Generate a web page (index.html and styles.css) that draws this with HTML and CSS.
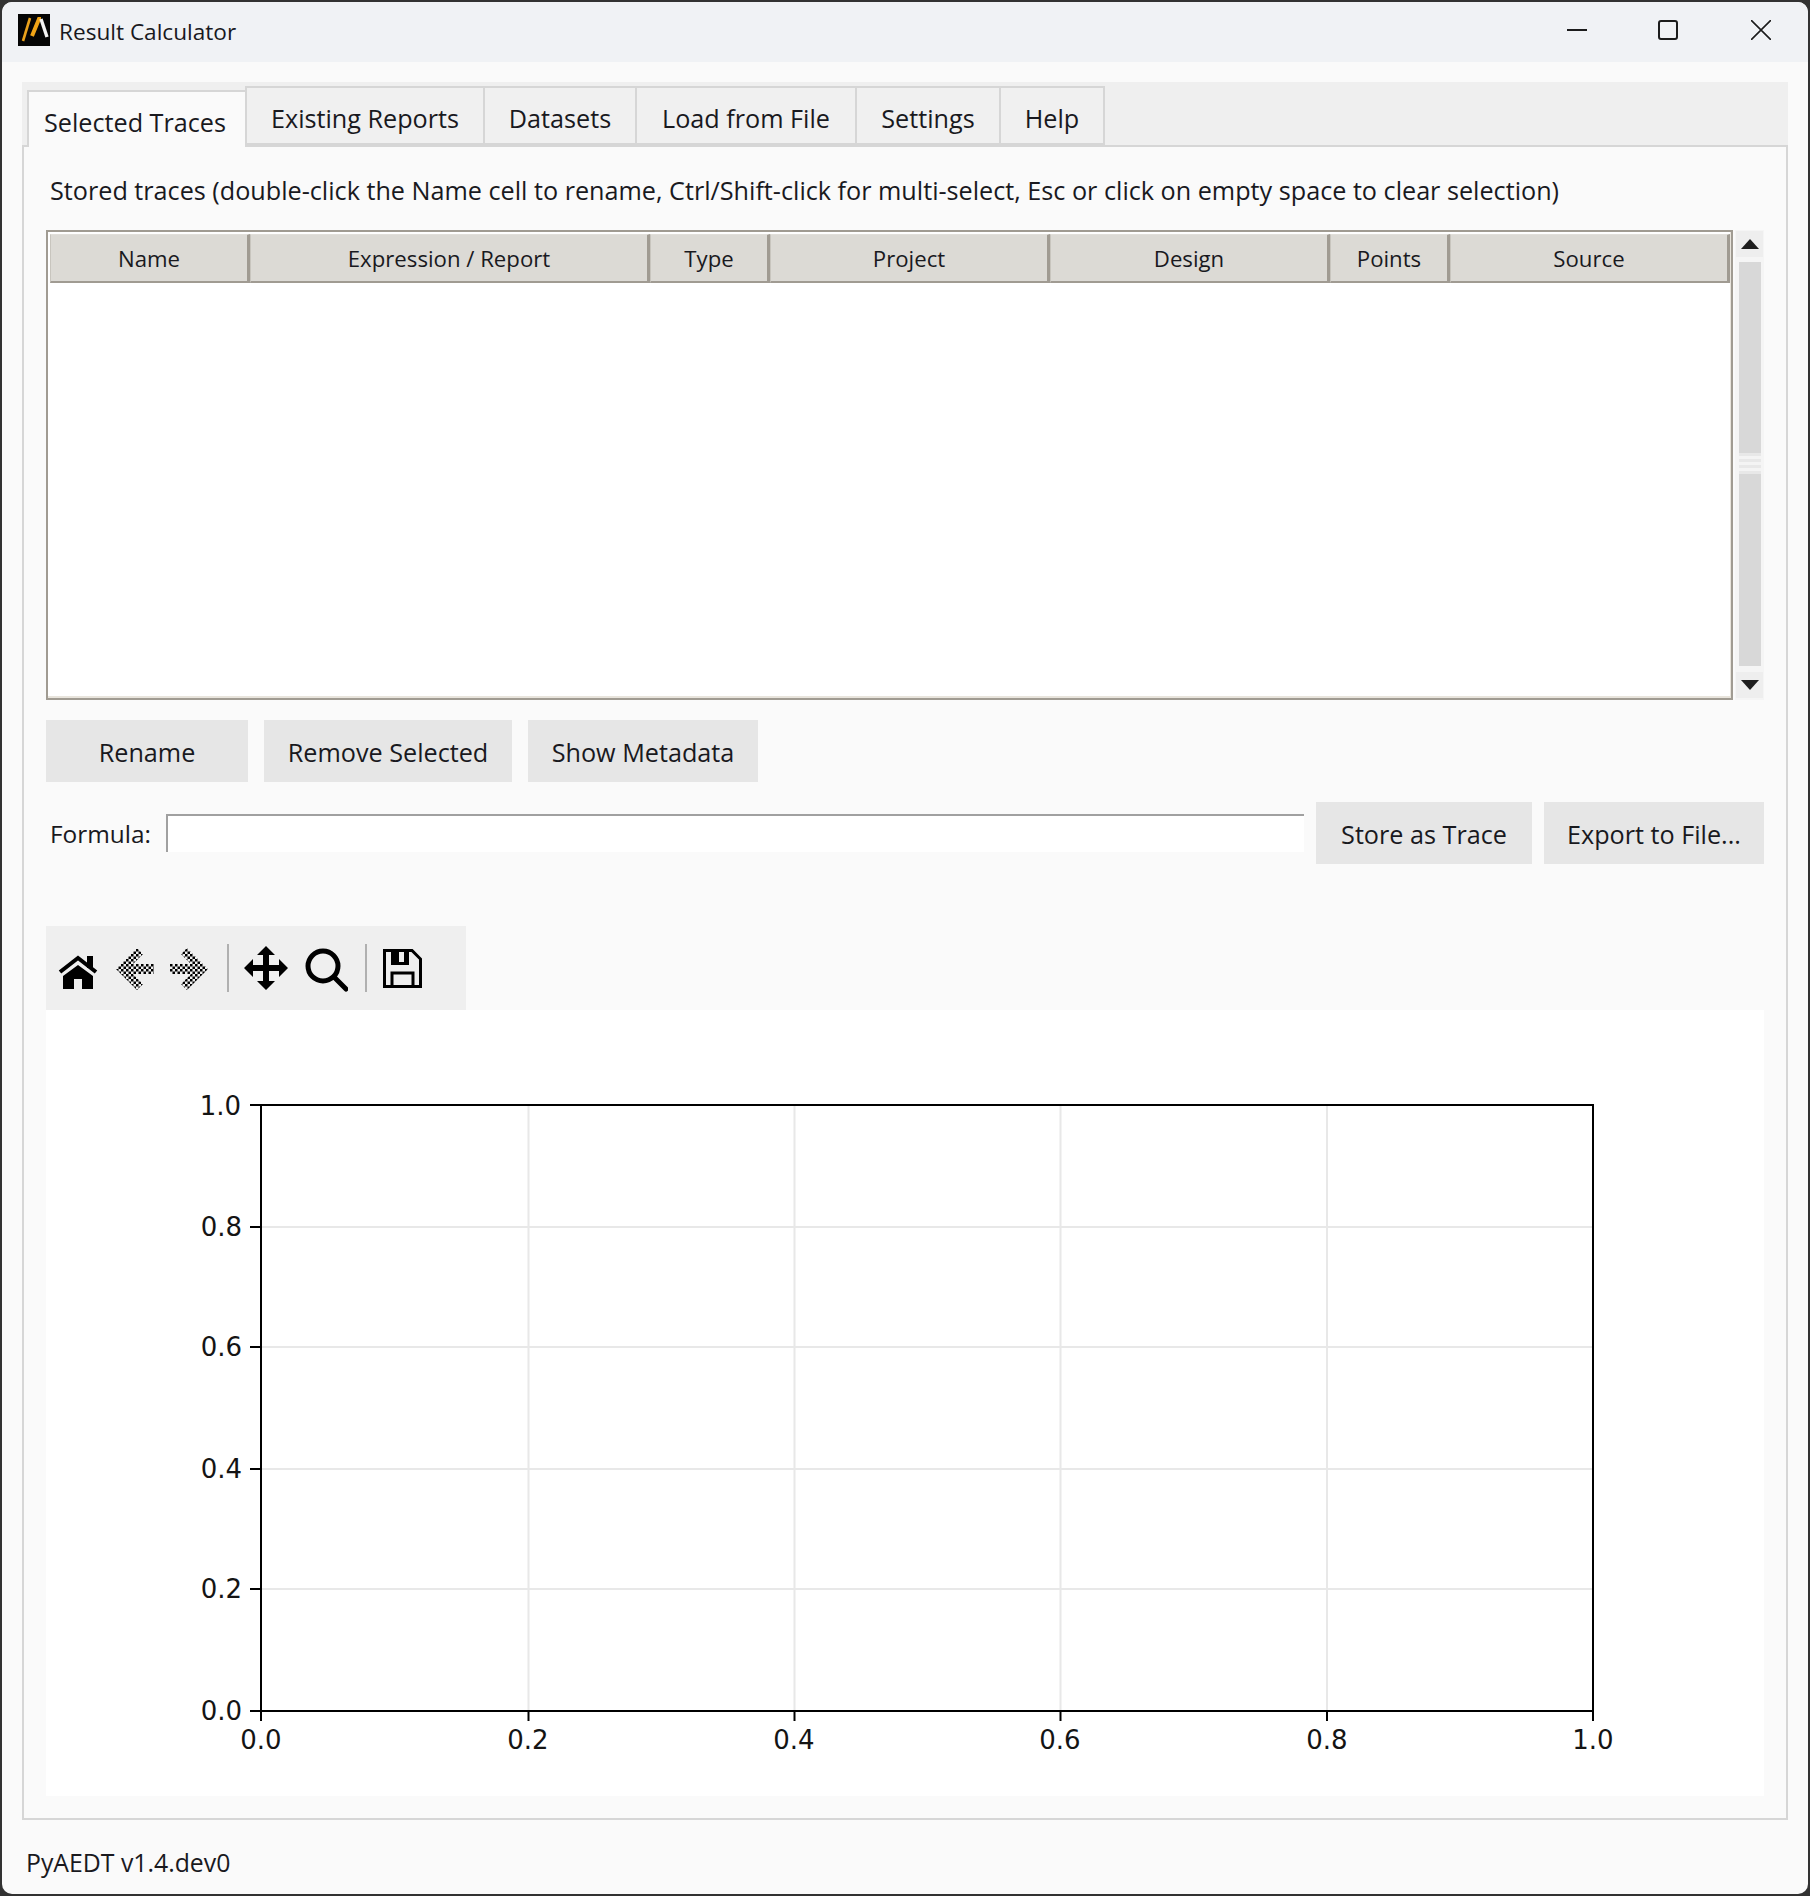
FILE: index.html
```html
<!DOCTYPE html>
<html>
  <head>
    <title>Result Calculator</title>
    <meta charset='UTF-8'>
    <link rel="stylesheet" href="styles.css">
  </head>
  <body>
    <div class='window'>
      <div class='titleBar'>
        <svg class='appIcon' viewBox='0 0 32 32'>
          <rect width='32' height='32' fill='#050505'/>
          <path d='M5 27 L12 4' stroke='#e9a11c' stroke-width='2.6' fill='none'/>
          <path d='M14 22 L21 5 L23 5' stroke='#f0a416' stroke-width='4' fill='none'/>
          <path d='M23 5 L29 23' stroke='#f4f4f4' stroke-width='3.4' fill='none'/>
        </svg>
        <span class='windowTitle'>Result Calculator</span>
        <div class='windowControls'>
          <svg class='minIcon' viewBox='0 0 20 20'><path d='M0 10 H20' stroke='#1c1c1c' stroke-width='2'/></svg>
          <svg class='maxIcon' viewBox='0 0 20 20'><rect x='1' y='1' width='18' height='18' rx='2' fill='none' stroke='#1c1c1c' stroke-width='2'/></svg>
          <svg class='closeIcon' viewBox='0 0 20 20'><path d='M0 0 L20 20 M20 0 L0 20' stroke='#1c1c1c' stroke-width='1.6'/></svg>
        </div>
      </div>

      <div class='content'>
        <div class='tabBar'>
          <div class='tab activeTab'>Selected Traces</div>
          <div class='tab tab1'>Existing Reports</div>
          <div class='tab tab2'>Datasets</div>
          <div class='tab tab3'>Load from File</div>
          <div class='tab tab4'>Settings</div>
          <div class='tab tab5'>Help</div>
        </div>

        <div class='pane'>
          <p class='hint'>Stored traces (double-click the Name cell to rename, Ctrl/Shift-click for multi-select, Esc or click on empty space to clear selection)</p>

          <div class='tableRow'>
            <div class='tableFrame'>
              <div class='tableHead'>
                <div class='headCell'>Name</div>
                <div class='headCell'>Expression / Report</div>
                <div class='headCell'>Type</div>
                <div class='headCell'>Project</div>
                <div class='headCell'>Design</div>
                <div class='headCell'>Points</div>
                <div class='headCell'>Source</div>
              </div>
            </div>
            <div class='scrollBar'>
              <div class='scrollBtn'><span class='arrowUp'></span></div>
              <div class='scrollTrack'>
                <div class='scrollHandle'></div>
              </div>
              <div class='scrollBtn'><span class='arrowDown'></span></div>
            </div>
          </div>

          <div class='buttonRow'>
            <button class='btn renameBtn'>Rename</button>
            <button class='btn removeBtn'>Remove Selected</button>
            <button class='btn metaBtn'>Show Metadata</button>
          </div>

          <div class='formulaRow'>
            <label class='formulaLabel' for='formula'>Formula:</label>
            <input id='formula' class='formulaInput' type='text'>
            <button class='btn storeBtn'>Store as Trace</button>
            <button class='btn exportBtn'>Export to File...</button>
          </div>

          <div class='toolbar'>
            <svg class='tool homeIcon' viewBox='0 0 40 48'>
              <path d='M2 28 L20 14 L38 28' fill='none' stroke='#000' stroke-width='4'/>
              <rect x='29' y='12' width='6' height='12' fill='#000'/>
              <path d='M20 21 L35 32 V45 H24 V35 H16 V45 H5 V32 Z' fill='#000'/>
            </svg>
            <svg class='tool backIcon' viewBox='0 0 38 48'>
              <defs>
                <pattern id='dither' width='5' height='5' patternUnits='userSpaceOnUse'>
                  <rect width='5' height='5' fill='#efefef'/>
                  <rect width='2.5' height='2.5' fill='#000'/>
                  <rect x='2.5' y='2.5' width='2.5' height='2.5' fill='#000'/>
                </pattern>
              </defs>
              <path d='M0 25 L21 4 L27 10 L17 20 H38 V30 H17 L27 40 L21 46 Z' fill='url(#dither)'/>
            </svg>
            <svg class='tool forwardIcon' viewBox='0 0 38 48'>
              <path d='M38 25 L17 4 L11 10 L21 20 H0 V30 H21 L11 40 L17 46 Z' fill='url(#dither)'/>
            </svg>
            <div class='toolSep sepOne'></div>
            <svg class='tool panIcon' viewBox='0 0 46 48'>
              <path d='M23 2 L32 11 H26 V21 H36 V15 L45 24 L36 33 V27 H26 V37 H32 L23 46 L14 37 H20 V27 H10 V33 L1 24 L10 15 V21 H20 V11 H14 Z' fill='#000'/>
            </svg>
            <svg class='tool zoomIcon' viewBox='0 0 43 48'>
              <circle cx='18' cy='22' r='15' fill='none' stroke='#000' stroke-width='5'/>
              <path d='M29 33 L41 45' stroke='#000' stroke-width='5' stroke-linecap='round'/>
            </svg>
            <div class='toolSep sepTwo'></div>
            <svg class='tool saveIcon' viewBox='0 0 39 48'>
              <path d='M1.5 6.5 H29 L37.5 15 V42.5 H1.5 Z' fill='none' stroke='#000' stroke-width='3'/>
              <path d='M8 6 H26 V21 H8 Z' fill='#000'/>
              <rect x='16' y='8' width='5' height='10' fill='#efefef'/>
              <path d='M9 42 V29 H30 V42' fill='none' stroke='#000' stroke-width='3'/>
            </svg>
          </div>

          <div class='canvas'>
            <svg class='plot' viewBox='0 0 1718 786'>
              <g class='grid'>
                <path d='M482.5 95 V701'/>
                <path d='M748.5 95 V701'/>
                <path d='M1014.5 95 V701'/>
                <path d='M1281 95 V701'/>
                <path d='M215 217 H1547'/>
                <path d='M215 337 H1547'/>
                <path d='M215 459 H1547'/>
                <path d='M215 579 H1547'/>
              </g>
              <rect class='axes' x='215' y='95' width='1332' height='606'/>
              <g class='ticks'>
                <path d='M215 701 V711'/>
                <path d='M482.5 701 V711'/>
                <path d='M748.5 701 V711'/>
                <path d='M1014.5 701 V711'/>
                <path d='M1281 701 V711'/>
                <path d='M1547 701 V711'/>
                <path d='M204 95 H215'/>
                <path d='M204 217 H215'/>
                <path d='M204 337 H215'/>
                <path d='M204 459 H215'/>
                <path d='M204 579 H215'/>
                <path d='M204 701 H215'/>
              </g>
              <g class='xLabels'>
                <text x='215' y='739'>0.0</text>
                <text x='482' y='739'>0.2</text>
                <text x='748' y='739'>0.4</text>
                <text x='1014' y='739'>0.6</text>
                <text x='1281' y='739'>0.8</text>
                <text x='1547' y='739'>1.0</text>
              </g>
              <g class='yLabels'>
                <text x='195' y='105'>1.0</text>
                <text x='196' y='226'>0.8</text>
                <text x='196' y='346'>0.6</text>
                <text x='196' y='468'>0.4</text>
                <text x='196' y='588'>0.2</text>
                <text x='196' y='710'>0.0</text>
              </g>
            </svg>
          </div>
        </div>

        <div class='statusBar'>PyAEDT v1.4.dev0</div>
      </div>
    </div>
  </body>
</html>
```

FILE: styles.css
```css
html, body {
  margin: 0;
  padding: 0;
  height: 1896px;
  overflow: hidden;
  background-color: rgb(50, 50, 50);
}

body {
  font-family: "Open Sans", "Noto Sans", sans-serif;
  font-size: 25.2px;
  color: rgb(25, 25, 30);
}

.window {
  margin: 2px 2px 2px 2px;
  height: 1892px;
  border-radius: 10px;
  overflow: hidden;
  background-color: rgb(250, 250, 250);
}

.titleBar {
  display: flex;
  align-items: center;
  height: 60px;
  padding-left: 16px;
  background-color: rgb(240, 242, 245);
}

.appIcon {
  width: 32px;
  height: 32px;
  margin-top: -4px;
}

.windowTitle {
  margin-left: 9px;
  font-size: 22.6px;
  margin-top: -1px;
}

.windowControls {
  display: flex;
  align-items: center;
  margin-left: auto;
  margin-right: 37px;
  margin-top: -4px;
  gap: 73px;
}

.minIcon, .maxIcon, .closeIcon {
  width: 20px;
  height: 20px;
}

.minIcon {
  margin-right: -2px;
}

.content {
  padding: 20px 20px 0 20px;
}

.tabBar {
  display: flex;
  align-items: flex-end;
  height: 63px;
  padding-left: 5px;
  background-color: rgb(239, 239, 239);
}

.tab {
  display: flex;
  align-items: center;
  justify-content: center;
  box-sizing: border-box;
  height: 59px;
  padding-top: 4px;
  border: 2px solid rgb(214, 214, 214);
  border-left: 0;
  background-color: rgb(240, 240, 240);
}

.activeTab {
  width: 218px;
  height: 57px;
  margin-bottom: -2px;
  padding: 4px 4px 0 0;
  border-left: 2px solid rgb(214, 214, 214);
  border-bottom: 0;
  border-right: 0;
  background-color: rgb(250, 250, 250);
  position: relative;
}

.tab1 { width: 240px; border-left: 2px solid rgb(214, 214, 214); }
.tab2 { width: 152px; }
.tab3 { width: 220px; }
.tab4 { width: 144px; }
.tab5 { width: 104px; }

.pane {
  box-sizing: border-box;
  height: 1675px;
  padding: 0 22px;
  border: 2px solid rgb(214, 214, 214);
  background-color: rgb(250, 250, 250);
}

.hint {
  margin: 20px 0 17px 4px;
  line-height: 46px;
  white-space: nowrap;
}

.tableRow {
  display: flex;
  gap: 2px;
  height: 470px;
}

.tableFrame {
  box-sizing: border-box;
  width: 1687px;
  padding: 2px 1px 0 2px;
  border: 2px solid rgb(160, 155, 146);
  background-color: #fff;
  box-shadow: inset -1px -2px 0 rgb(232, 228, 220);
}

.tableHead {
  display: grid;
  grid-template-columns: 200px 400px 120px 280px 280px 120px 1fr;
  height: 49px;
}

.headCell {
  display: flex;
  align-items: center;
  justify-content: center;
  padding-top: 1px;
  box-sizing: border-box;
  border: 0 solid rgb(160, 155, 146);
  border-width: 1px 3px 2px 1px;
  border-top-color: rgb(225, 223, 218);
  border-left-color: rgb(200, 197, 190);
  background-color: rgb(220, 218, 213);
  font-size: 22.2px;
}

.scrollBar {
  display: flex;
  flex-direction: column;
  align-items: center;
  width: 29px;
  padding: 1px 0 2px 0;
  box-sizing: border-box;
  background-color: rgb(245, 245, 245);
}

.scrollBtn {
  display: flex;
  align-items: center;
  justify-content: center;
  width: 27px;
  height: 26px;
  flex: none;
  background-color: rgb(238, 238, 238);
}

.arrowUp {
  border-left: 9px solid transparent;
  border-right: 9px solid transparent;
  border-bottom: 10px solid rgb(30, 30, 30);
}

.arrowDown {
  border-left: 9px solid transparent;
  border-right: 9px solid transparent;
  border-top: 10px solid rgb(30, 30, 30);
}

.scrollTrack {
  flex: 1;
  width: 22px;
  margin: 5px 0 6px 0;
  padding-top: 191px;
  box-sizing: border-box;
  background-color: rgb(216, 216, 216);
}

.scrollHandle {
  height: 21px;
  background: repeating-linear-gradient(rgb(232, 232, 232) 0, rgb(232, 232, 232) 3px, rgb(244, 244, 244) 3px, rgb(244, 244, 244) 6px);
}

.buttonRow {
  display: flex;
  gap: 16px;
  margin-top: 20px;
}

.btn {
  height: 62px;
  padding: 1px 0 0 0;
  border: 0;
  font-family: inherit;
  font-size: 25.2px;
  color: inherit;
  background-color: rgb(230, 230, 230);
}

.renameBtn { width: 202px; }
.removeBtn { width: 248px; }
.metaBtn { width: 230px; }
.storeBtn { width: 216px; }
.exportBtn { width: 220px; }

.formulaRow {
  display: flex;
  align-items: center;
  margin-top: 20px;
}

.formulaLabel {
  width: 116px;
  padding-left: 4px;
  padding-top: 1px;
  font-size: 24.4px;
}

.formulaInput {
  box-sizing: border-box;
  width: 1138px;
  height: 38px;
  margin-right: 12px;
  padding: 0;
  border: 0;
  border-top: 2px solid rgb(160, 160, 160);
  border-left: 2px solid rgb(160, 160, 160);
  border-radius: 0;
  outline: none;
  background-color: #fff;
}

.storeBtn {
  margin-right: 12px;
}

.toolbar {
  display: flex;
  align-items: center;
  width: 420px;
  height: 84px;
  margin-top: 62px;
  padding-left: 12px;
  box-sizing: border-box;
  background-color: rgb(239, 239, 239);
}

.tool {
  flex: none;
  height: 48px;
}

.homeIcon { width: 40px; }
.backIcon { width: 38px; margin-left: 18px; }
.forwardIcon { width: 38px; margin-left: 16px; }
.panIcon { width: 46px; margin-left: 14px; }
.zoomIcon { width: 43px; margin-left: 16px; }
.saveIcon { width: 39px; margin-left: 16px; }

.toolSep {
  flex: none;
  width: 2px;
  height: 48px;
  background-color: rgb(176, 176, 176);
}

.sepOne { margin-left: 19px; }
.sepTwo { margin-left: 17px; }

.canvas {
  height: 786px;
  background-color: #fff;
}

.plot {
  display: block;
  width: 1718px;
  height: 786px;
}

.grid path {
  stroke: rgb(232, 232, 232);
  stroke-width: 2;
}

.axes {
  fill: none;
  stroke: #000;
  stroke-width: 2;
}

.ticks path {
  stroke: #000;
  stroke-width: 2;
}

.plot text {
  font-family: "DejaVu Sans", sans-serif;
  font-size: 26px;
  fill: rgb(20, 20, 20);
}

.xLabels text {
  text-anchor: middle;
}

.yLabels text {
  text-anchor: end;
}

.statusBar {
  padding: 19px 0 0 4px;
  line-height: 46px;
  font-size: 24.8px;
}
```
